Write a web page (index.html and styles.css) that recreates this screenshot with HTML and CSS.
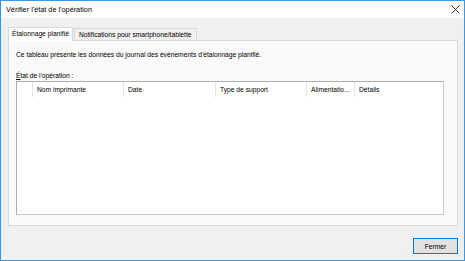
FILE: index.html
```html
<!DOCTYPE html>
<html lang="fr">
<head>
    <meta charset="UTF-8">
    <title>Vérifier l'état de l'opération</title>
    <link rel="stylesheet" href="styles.css">
</head>
<body>
    <div class="window">
        <div class="titlebar">
            <span class="title">Vérifier l'état de l'opération</span>
            <svg class="close" width="9" height="9" viewBox="0 0 9 9">
                <path d="M0.5 0.5 L8.5 8.5 M8.5 0.5 L0.5 8.5" stroke="#222" stroke-width="0.9" fill="none"/>
            </svg>
        </div>
        <div class="content">
            <div class="tabs">
                <div class="tab active">Étalonnage planifié</div>
                <div class="tab">Notifications pour smartphone/tablette</div>
            </div>
            <div class="panel">
                <p class="desc">Ce tableau présente les données du journal des événements d'étalonnage planifié.</p>
                <label class="status-label"><u>É</u>tat de l'opération :</label>
                <div class="listview">
                    <div class="list-header">
                        <div class="col col-icon"></div>
                        <div class="col col-name">Nom imprimante</div>
                        <div class="col col-date">Date</div>
                        <div class="col col-type">Type de support</div>
                        <div class="col col-power">Alimentatio...</div>
                        <div class="col col-details">Détails</div>
                    </div>
                </div>
            </div>
            <div class="footer">
                <button class="btn">Fermer</button>
            </div>
        </div>
    </div>
</body>
</html>
```

FILE: styles.css
```css
body {
    margin: 0;
    font-family: "Liberation Sans", Arial, sans-serif;
    font-size: 6.7px;
    color: #000;
    background: #fff;
}
.window {
    width: 465px;
    height: 261px;
    box-sizing: border-box;
    border: 1px solid #3d97e0;
    display: flex;
    flex-direction: column;
    background: #f0f0f0;
}
.titlebar {
    height: 17px;
    background: #fff;
    display: flex;
    align-items: center;
    justify-content: space-between;
    padding: 0 4px 0 5px;
    font-size: 7.3px;
}
.content {
    flex: 1;
    display: flex;
    flex-direction: column;
    padding: 9px 6px 0 7px;
}
.tabs {
    display: flex;
    align-items: flex-end;
    height: 13px;
    position: relative;
    z-index: 1;
}
.tab {
    height: 11px;
    line-height: 11px;
    padding: 0 4px;
    border: 1px solid #d9d9d9;
    border-bottom: none;
    background: #f0f0f0;
    margin-left: 1px;
}
.tab.active {
    height: 13px;
    line-height: 12px;
    background: #fff;
    margin-left: 0;
    position: relative;
    top: 1px;
    padding: 0 3px;
}
.panel {
    height: 186px;
    box-sizing: border-box;
    border: 1px solid #d9d9d9;
    background: #f9f9f9;
    padding: 9px 13px 0 7px;
}
.desc {
    margin: 0;
    line-height: 9px;
}
.status-label {
    display: block;
    margin-top: 12px;
    line-height: 9px;
}
.status-label u {
    text-decoration-thickness: 0.5px;
}
.listview {
    margin-top: 1px;
    height: 134px;
    box-sizing: border-box;
    background: #fff;
    border: 1px solid #adadad;
    border-right-color: #c8c8c8;
    border-bottom-color: #c8c8c8;
}
.list-header {
    display: flex;
    height: 15px;
    align-items: center;
}
.col {
    height: 15px;
    line-height: 15px;
    box-sizing: border-box;
    padding-left: 4px;
    border-right: 1px solid #e5e5e5;
    white-space: nowrap;
}
.col-icon { width: 16px; }
.col-name { width: 91px; }
.col-date { width: 92px; }
.col-type { width: 91px; }
.col-power { width: 48px; }
.col-details { border-right: none; }
.footer {
    flex: 1;
    display: flex;
    justify-content: flex-end;
    align-items: flex-start;
    padding-top: 12px;
}
.btn {
    width: 45px;
    height: 16px;
    padding: 0;
    font-family: inherit;
    font-size: 6.7px;
    background: #e1e1e1;
    border: 1px solid #0078d7;
    box-shadow: inset 0 0 0 1px #e1e1e1;
    color: #000;
}
```
